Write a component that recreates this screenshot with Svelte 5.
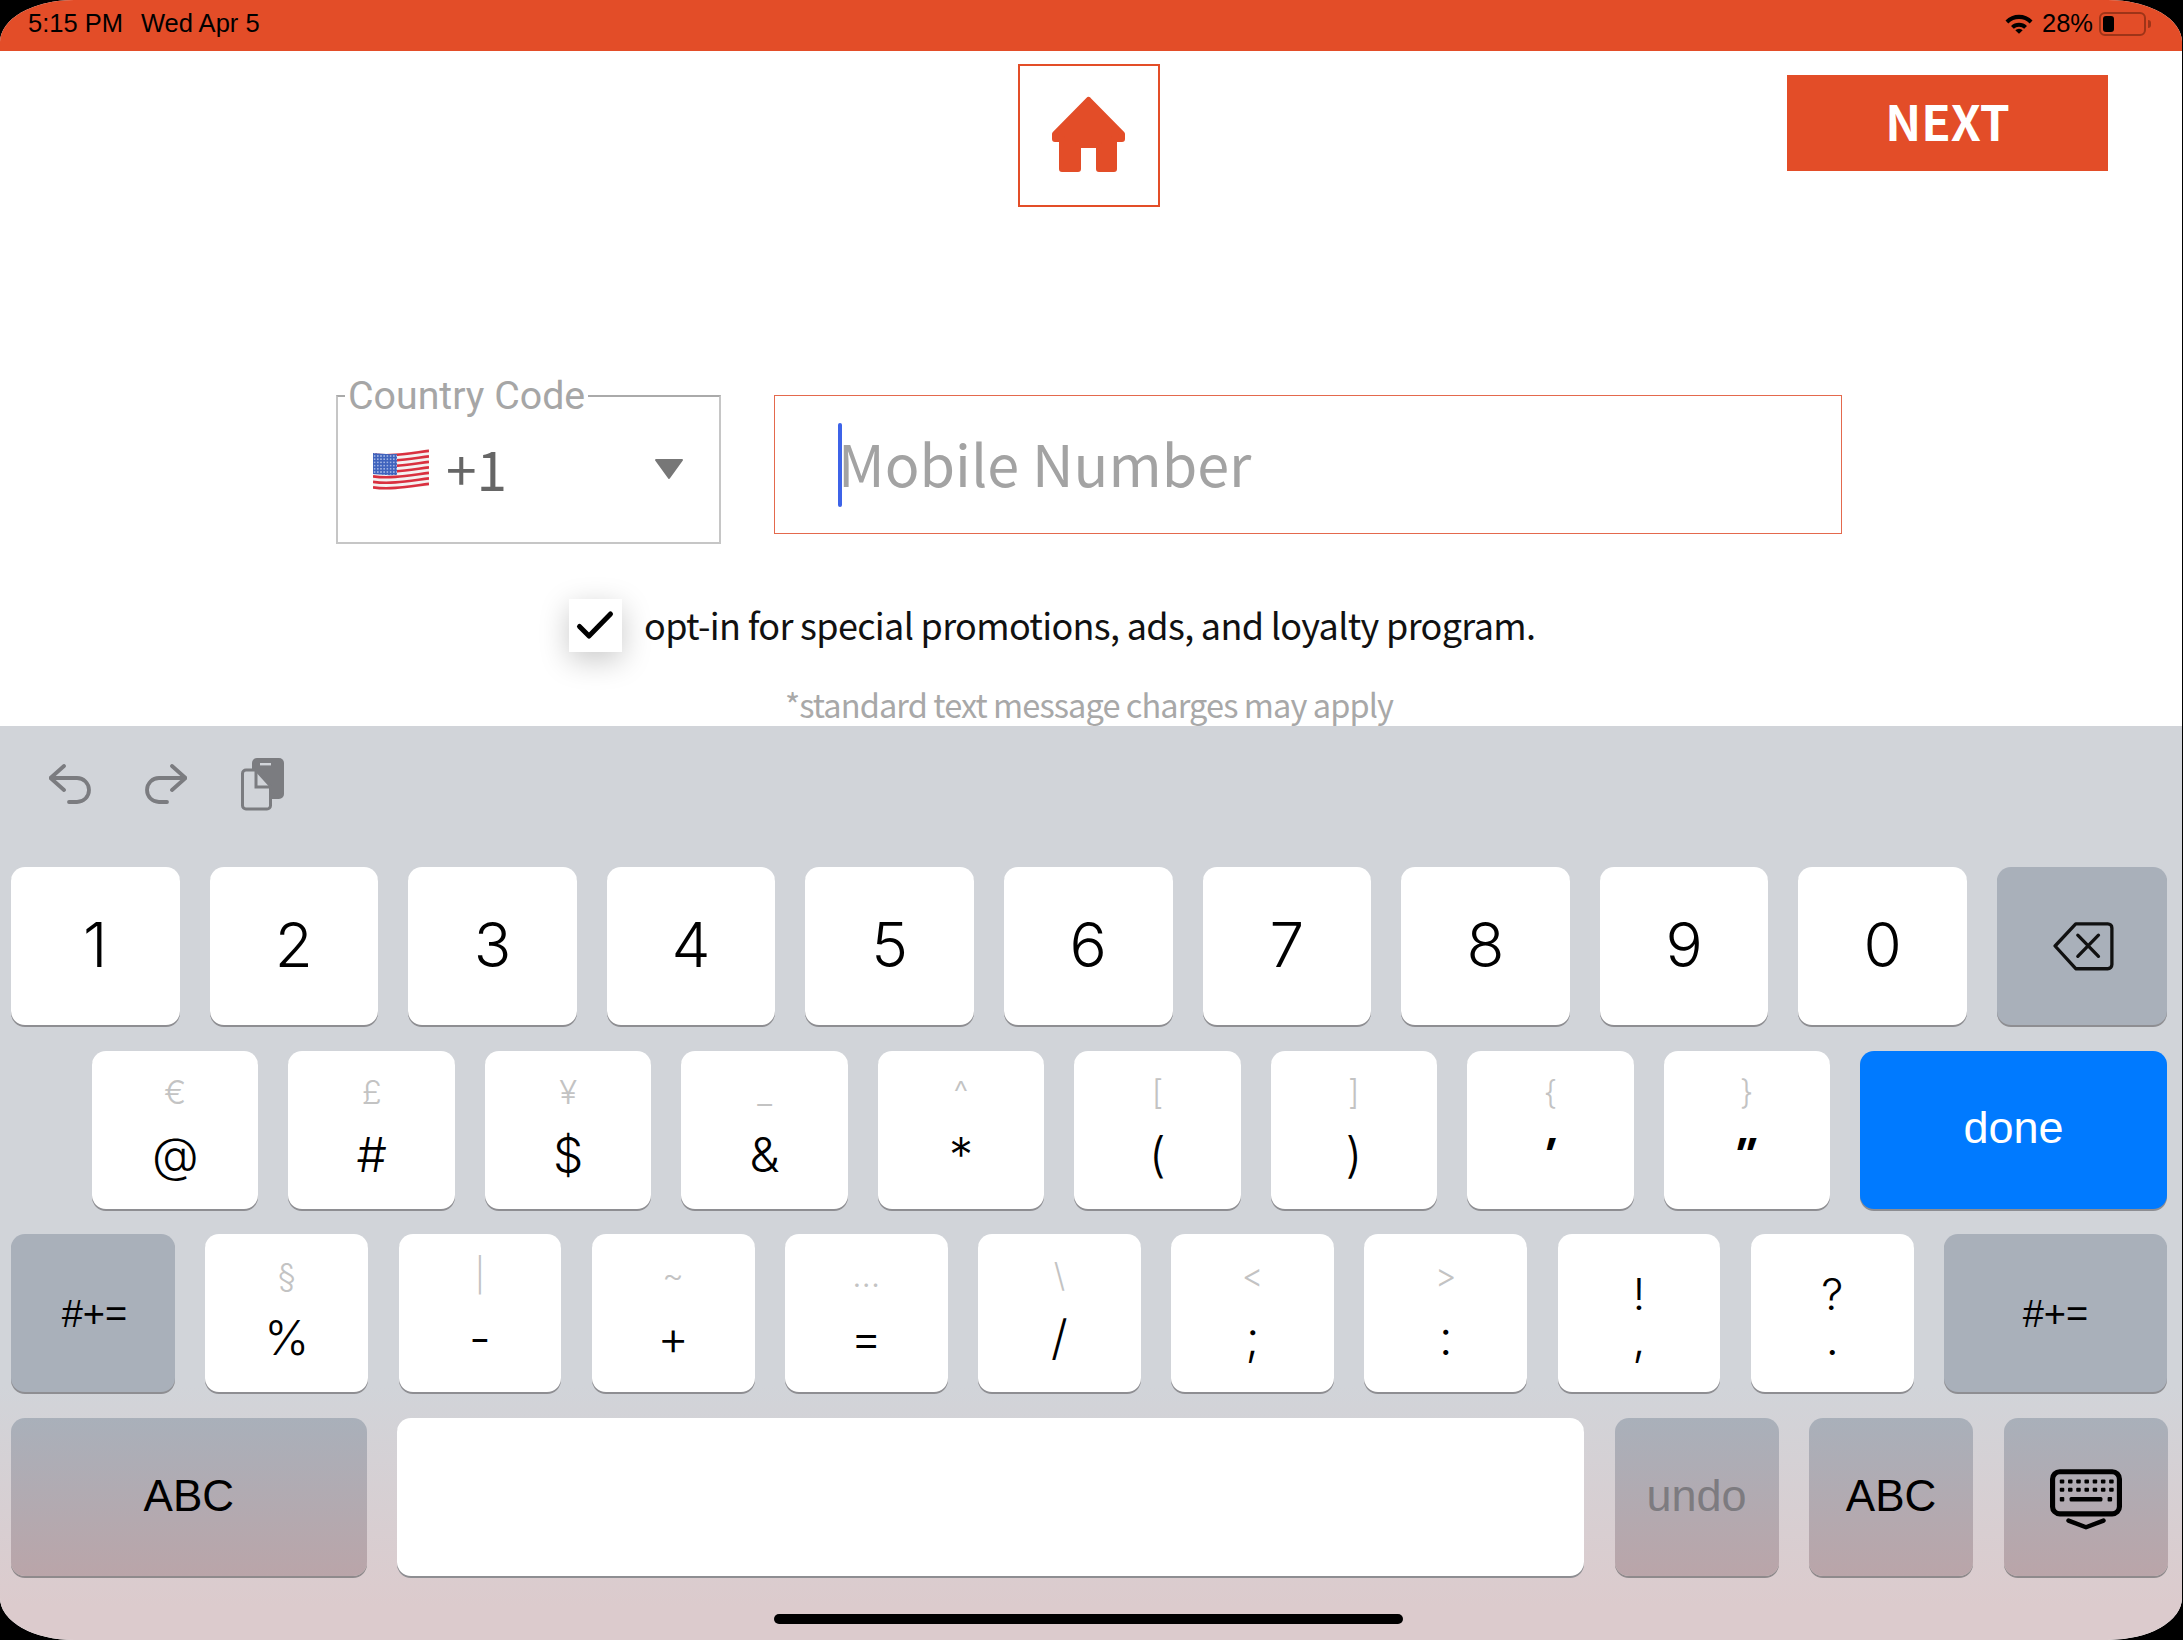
<script>
  const digits = ['1', '2', '3', '4', '5', '6', '7', '8', '9', '0']

  const row2 = [
    ['€', '@'], ['£', '#'], ['¥', '$'], ['_', '&'], ['^', '*'],
    ['[', '('], [']', ')'], ['{', "'"], ['}', '"']
  ]

  const row3 = [
    ['§', '%'], ['|', '-'], ['~', '+'], ['…', '='], ['\\', '/'],
    ['<', ';'], ['>', ':'], ['!', ','], ['?', '.']
  ]

  // flag stripes, red ones only, white is the base shape
  const stripes = [0, 1, 2, 3, 4, 5, 6].map((i) => 6.4 + i * 5.5)
  const wave = (y) => `M0 ${y} C18 ${y + 2.5} 36 ${y - 1} 56 ${y - 3.5}`

  const kbRows = [
    { y: 12, xs: [13, 21, 29, 37, 45, 53, 61] },
    { y: 20, xs: [13, 21, 29, 37, 45, 53, 61] }
  ]
</script>

<div class="frame">
  <div class="screen">
    <header class="status">
      <div class="clock">
        <span>5:15 PM</span>
        <span>Wed Apr 5</span>
      </div>
      <div class="status-right">
        <svg class="wifi" width="28" height="21" viewBox="0 0 28 20">
          <path d="M0.5 7a19 19 0 0 1 27 0l-2.8 2.9a15 15 0 0 0-21.4 0z" />
          <path d="M6 12.5a11.4 11.4 0 0 1 16 0l-2.8 2.8a7.4 7.4 0 0 0-10.4 0z" />
          <path d="M10.3 16.7a5.2 5.2 0 0 1 7.4 0L14 20.2z" />
        </svg>
        <span class="pct">28%</span>
        <div class="battery"><div class="level"></div></div>
        <div class="nub"></div>
      </div>
    </header>

    <main class="page">
      <div class="top">
        <div></div>
        <button class="home" aria-label="Home">
          <svg width="80" height="80" viewBox="0 0 80 80">
            <path
              d="M39.5 5L73 39V44H65V74H50V50H29V74H13V44H6V39Z"
              fill="#e34d28"
              stroke="#e34d28"
              stroke-width="6"
              stroke-linejoin="round"
            />
          </svg>
        </button>
        <button class="next">NEXT</button>
      </div>

      <div class="fields">
        <div class="country">
          <span class="legend">Country Code</span>
          <svg class="flag" width="56" height="44" viewBox="0 0 56 44">
            <defs>
              <pattern id="stars" width="3.2" height="3.2" patternUnits="userSpaceOnUse">
                <circle cx="1.6" cy="1.6" r="0.75" fill="#c9d4f2" />
              </pattern>
            </defs>
            <path d="M0 5C18 7.5 36 4 56 1V38C36 39.5 18 43.5 0 41Z" fill="#f4f1f1" />
            {#each stripes as y}
              <path d={wave(y)} fill="none" stroke="#d9303f" stroke-width="2.7" />
            {/each}
            <path d="M0 5C8 6 16 6.4 24 6V27C16 27.4 8 27 0 26Z" fill="#3f63bd" />
            <path d="M0 5C8 6 16 6.4 24 6V27C16 27.4 8 27 0 26Z" fill="url(#stars)" />
          </svg>
          <span class="code">+1</span>
          <svg class="arrow" width="30" height="22" viewBox="0 0 30 22">
            <path d="M2 2H28L15 20Z" fill="#777" stroke="#777" stroke-width="2" stroke-linejoin="round" />
          </svg>
        </div>

        <div class="mobile">
          <span class="caret"></span>
          <span class="placeholder">Mobile Number</span>
        </div>
      </div>

      <div class="optin">
        <div class="checkbox">
          <svg width="53" height="53" viewBox="0 0 53 53">
            <path d="M10.5 27.5L20 37L41.5 15" fill="none" stroke="#000" stroke-width="5" stroke-linecap="round" stroke-linejoin="round" />
          </svg>
        </div>
        <span class="optin-text">opt-in for special promotions, ads, and loyalty program.</span>
      </div>

      <p class="charges">*standard text message charges may apply</p>
    </main>

    <section class="keyboard">
      <div class="tools">
        <svg class="tool" width="42" height="40" viewBox="0 0 42 40">
          <path d="M15 2L1.5 14L15 26M1.5 14H28a12 12 0 0 1 0 24H20" fill="none" stroke="#7b7c80" stroke-width="3.8" stroke-linecap="round" stroke-linejoin="round" />
        </svg>
        <svg class="tool redo" width="42" height="40" viewBox="0 0 42 40">
          <path d="M15 2L1.5 14L15 26M1.5 14H28a12 12 0 0 1 0 24H20" fill="none" stroke="#7b7c80" stroke-width="3.8" stroke-linecap="round" stroke-linejoin="round" />
        </svg>
        <svg class="tool paste" width="44" height="53" viewBox="0 0 44 53">
          <rect x="11" y="0" width="32" height="41" rx="5" fill="#7b7c80" />
          <rect x="19" y="5" width="11" height="2.4" fill="#d1d4d9" />
          <path d="M15 12H5a3.5 3.5 0 0 0-3.5 3.5V47.5A3.5 3.5 0 0 0 5 51H26a3.5 3.5 0 0 0 3.5-3.5V28Z" fill="#d1d4d9" stroke="#7b7c80" stroke-width="3" stroke-linejoin="round" />
          <path d="M15 13V29H29" fill="none" stroke="#7b7c80" stroke-width="3" />
        </svg>
      </div>

      <div class="rows">
        <div class="row">
          {#each digits as d}
            <div class="key digit">{d}</div>
          {/each}
          <div class="key gray backspace" aria-label="Backspace">
            <svg width="62" height="54" viewBox="0 0 60 52">
              <path d="M2 26L22 4.5H53a4 4 0 0 1 4 4V44a4 4 0 0 1-4 4H22Z" fill="none" stroke="#111" stroke-width="3.2" stroke-linejoin="round" />
              <path d="M24 15.5L44 36M44 15.5L24 36" fill="none" stroke="#111" stroke-width="3.2" stroke-linecap="round" />
            </svg>
          </div>
        </div>

        <div class="row row2">
          {#each row2 as [hint, main]}
            <div class="key sym">
              <span class="hint">{hint}</span>
              <span class="main" class:tick={main === "'" || main === '"'}>{main}</span>
            </div>
          {/each}
          <div class="key done">done</div>
        </div>

        <div class="row row3">
          <div class="key gray label small first">#+=</div>
          {#each row3 as [hint, main]}
            <div class="key sym">
              <span class="hint" class:dark={hint === '!' || hint === '?'}>{hint}</span>
              <span class="main">{main}</span>
            </div>
          {/each}
          <div class="key gray label small last">#+=</div>
        </div>

        <div class="row row4">
          <div class="key fade label abc-wide">ABC</div>
          <div class="key space"></div>
          <div class="key fade label undo">undo</div>
          <div class="key fade label abc">ABC</div>
          <div class="key fade hide" aria-label="Hide keyboard">
            <svg width="72" height="62" viewBox="0 0 70 60">
              <rect x="2.5" y="2.5" width="65" height="41" rx="7" fill="none" stroke="#000" stroke-width="5" />
              {#each kbRows as r}
                {#each r.xs as x}
                  <rect x={x - 3.5} y={r.y - 2} width="4.4" height="4" rx="1" fill="#000" />
                {/each}
              {/each}
              <rect x="9.5" y="27" width="4.4" height="4.4" rx="1" fill="#000" />
              <rect x="19" y="27" width="32" height="4.4" rx="1.5" fill="#000" />
              <rect x="56" y="27" width="4.4" height="4.4" rx="1" fill="#000" />
              <path d="M18 50L35 56.5L52 50" fill="none" stroke="#000" stroke-width="4.4" stroke-linecap="round" stroke-linejoin="round" />
            </svg>
          </div>
        </div>
      </div>

      <div class="indicator"></div>
    </section>
  </div>
</div>

<style>
  :global(body) {
    margin: 0;
    background: #000;
  }

  .frame {
    width: 2183px;
    height: 1640px;
    background: #000;
    overflow: hidden;
  }

  .screen {
    width: 2182px;
    height: 1640px;
    border-radius: 74px / 42px;
    overflow: hidden;
    background: #fff;
    display: flex;
    flex-direction: column;
    font-family: "Noto Sans CJK SC", "Noto Sans", sans-serif;
  }

  /* status bar */
  .status {
    height: 51px;
    flex: none;
    background: #e34d28;
    display: flex;
    justify-content: space-between;
    align-items: center;
    padding: 0 31px 4px 28px;
    box-sizing: border-box;
    font-family: "Liberation Sans", Arial, sans-serif;
    font-size: 25.5px;
    color: #000;
  }

  .clock {
    display: flex;
    gap: 18px;
  }

  .status-right {
    display: flex;
    align-items: center;
  }

  .pct {
    margin-left: 9px;
  }

  .battery {
    margin-left: 6px;
    width: 47px;
    height: 24px;
    box-sizing: border-box;
    border: 2px solid #9e3418;
    border-radius: 6px;
    padding: 2px;
  }

  .level {
    width: 11px;
    height: 16px;
    background: #000;
    border-radius: 3px;
  }

  .nub {
    width: 3px;
    height: 8px;
    margin-left: 2px;
    background: #9e3418;
    border-radius: 0 3px 3px 0;
  }

  /* page */
  .page {
    height: 675px;
    flex: none;
    overflow: hidden;
    display: flex;
    flex-direction: column;
  }

  .top {
    display: grid;
    grid-template-columns: 1fr 142px 1fr;
    padding: 13px 0 0 0;
    width: 2178px;
  }

  .home {
    width: 142px;
    height: 143px;
    box-sizing: border-box;
    border: 2.5px solid #e34d28;
    background: #fff;
    padding: 0;
    display: flex;
    align-items: center;
    justify-content: center;
  }

  .home svg {
    margin-top: -2px;
  }

  .next {
    justify-self: end;
    margin: 11px 70px 0 0;
    width: 321px;
    height: 96px;
    border: 0;
    background: #e34d28;
    color: #fff;
    font-family: inherit;
    font-size: 48px;
    font-weight: 700;
    line-height: 90px;
    padding: 0 0 6px;
  }

  .fields {
    display: flex;
    gap: 53px;
    margin-top: 188px;
    padding-left: 336px;
    align-items: flex-start;
  }

  .country {
    position: relative;
    width: 385px;
    height: 149px;
    box-sizing: border-box;
    border: 2px solid #c6c6c6;
    border-top-color: #aaa;
    display: flex;
    align-items: flex-start;
    padding: 51px 0 0 35px;
  }

  .legend {
    position: absolute;
    left: 7px;
    top: -23px;
    padding: 0 3px;
    background: #fff;
    font-family: Roboto, "Liberation Sans", sans-serif;
    font-size: 39.3px;
    line-height: 44px;
    color: #a6a6a6;
  }

  .code {
    margin-left: 17px;
    font-size: 55px;
    line-height: 50px;
    margin-top: -6px;
    color: #666;
  }

  .arrow {
    position: absolute;
    left: 316px;
    top: 61px;
  }

  .mobile {
    width: 1068px;
    height: 139px;
    box-sizing: border-box;
    border: 1.5px solid #e4694d;
    display: flex;
    align-items: center;
    padding-left: 63px;
  }

  .caret {
    width: 4px;
    height: 84px;
    background: #3d63e8;
    border-radius: 2px;
    margin-right: -3px;
    flex: none;
  }

  .placeholder {
    font-size: 57.5px;
    font-weight: 400;
    color: #a3a3a3;
    line-height: 84px;
    margin: -6px 0 0 -1px;
  }

  .optin {
    display: flex;
    align-items: center;
    gap: 22px;
    margin-top: 55px;
    padding-left: 569px;
    font-size: 36px;
    color: #111;
  }

  .optin-text {
    letter-spacing: -0.68px;
    margin-top: -4px;
  }

  .checkbox {
    width: 53px;
    height: 53px;
    background: #fff;
    box-shadow: 0 8px 30px rgba(0, 0, 0, 0.22);
    flex: none;
  }

  .charges {
    margin: 29px 4px 0 0;
    text-align: center;
    font-size: 32.5px;
    letter-spacing: -0.9px;
    line-height: 46px;
    color: #a8a8a8;
  }

  /* keyboard */
  .keyboard {
    height: 914px;
    flex: none;
    background: linear-gradient(to bottom, #d1d4d9 660px, #dccbcd 880px);
    font-family: Inter, "Liberation Sans", Arial, sans-serif;
    font-weight: 300;
    color: #000;
    display: flex;
    flex-direction: column;
  }

  .tools {
    height: 141px;
    flex: none;
    display: flex;
    align-items: flex-start;
    padding-left: 49px;
  }

  .tool {
    margin-top: 38px;
    margin-right: 54px;
  }

  .redo {
    transform: scaleX(-1);
  }

  .paste {
    margin-top: 32px;
  }

  .rows {
    display: flex;
    flex-direction: column;
    gap: 25.67px;
    padding: 0 15px 0 11px;
  }

  .row {
    display: flex;
    gap: 30px;
  }

  .row2 {
    padding-left: 81px;
  }

  .row3 {
    gap: 30.4px;
  }

  .row4 {
    gap: 30.5px;
  }

  .key {
    flex: 1 1 0;
    min-width: 0;
    height: 158px;
    background: #fff;
    border-radius: 14px;
    box-shadow: 0 2px 0 #8e8e92;
    display: flex;
    align-items: center;
    justify-content: center;
    box-sizing: border-box;
  }

  .digit {
    font-size: 62px;
    padding-bottom: 3px;
  }

  .gray {
    background: #a9b0ba;
  }

  .backspace {
    flex: none;
    width: 170px;
  }

  .backspace svg {
    margin-left: 4px;
  }

  .sym {
    flex-direction: column;
    justify-content: flex-start;
    padding-top: 23px;
  }

  .hint {
    height: 36px;
    line-height: 36px;
    font-size: 33px;
    color: #c3c3c3;
  }

  .hint.dark {
    height: 34px;
    line-height: 34px;
    margin-top: 20px;
    font-size: 44px;
    color: #000;
  }

  .main {
    margin-top: 15px;
    height: 60px;
    line-height: 60px;
    font-size: 48px;
  }

  .hint.dark + .main {
    margin-top: 0;
    height: 54px;
    line-height: 54px;
  }

  .main.tick {
    font-family: "Liberation Sans", Arial, sans-serif;
    transform: translate(-3px, 3px) skewX(-16deg);
    font-weight: bold;
    margin-top: 12px;
  }

  .done {
    flex: none;
    width: 307px;
    background: #007aff;
    color: #fff;
    font-family: "Liberation Sans", Arial, sans-serif;
    font-size: 45px;
    padding-bottom: 3px;
  }

  .label {
    font-family: "Liberation Sans", Arial, sans-serif;
    font-size: 44px;
    padding-bottom: 1px;
  }

  .label.small {
    font-size: 38px;
    padding: 3px 0 0;
  }

  .label.first {
    flex: none;
    width: 164px;
    padding-left: 3px;
  }

  .label.last {
    flex: none;
    width: 223px;
  }

  .fade {
    background: linear-gradient(to bottom, #a9b0ba, #baa5a9);
    box-shadow: 0 2px 0 #8f8a8c;
  }

  .abc-wide {
    flex: none;
    width: 355.6px;
  }

  .space {
    flex: none;
    width: 1187px;
  }

  .undo {
    flex: none;
    width: 164px;
    color: #7d7b80;
    font-size: 45px;
  }

  .abc {
    flex: none;
    width: 164px;
  }

  .hide {
    flex: none;
    width: 164px;
  }

  .hide svg {
    margin-top: 6px;
  }

  .indicator {
    width: 629px;
    height: 10px;
    margin: 38px 0 0 774px;
    background: #000;
    border-radius: 5px;
    flex: none;
  }
</style>
